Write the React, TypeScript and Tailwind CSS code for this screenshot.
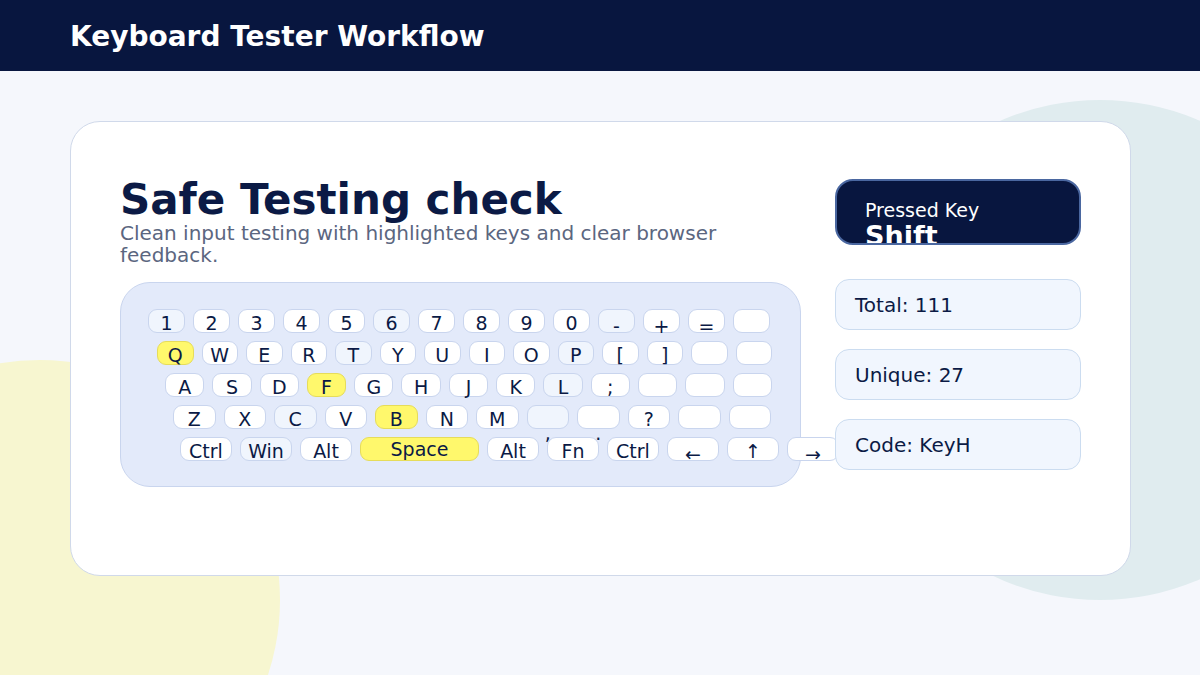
import React from "react";

const F = { fontFamily: '"DejaVu Sans", sans-serif' };
const light = new Set(["1", "6", "-", "T", "P", "L", "C", ",", "Win"]);
const yellow = new Set(["Q", "F", "B", "Space"]);

function Key({ k, w }: { k: string; w: string }) {
  const bg = yellow.has(k) ? "bg-[#fff86c] border-[#e6dc5a]" : light.has(k) ? "bg-[#f0f5fd] border-[#c9d5ee]" : "bg-white border-[#c9d5ee]";
  const lowered = k === "," || k === "." ? "pt-[18px]" : k === "-" || k === "+" || k === "=" || k === "←" || k === "→" ? "pt-[7px]" : "pt-[4px]";
  return (
    <div className={`${w} h-[24px] shrink-0 rounded-[9px] border ${bg} flex justify-center ${lowered} text-[19px] leading-none text-[#0b1a45] whitespace-nowrap`}>
      {k === "Space" ? <span className="-mt-[2px]">{k}</span> : k}
    </div>
  );
}

const rows: [string[], string][] = [
  [["1","2","3","4","5","6","7","8","9","0","-","+","=",""], "w-[37px]"],
  [["Q","W","E","R","T","Y","U","I","O","P","[","]","",""], "w-[36.5px]"],
  [["A","S","D","F","G","H","J","K","L",";","","",""], "w-[39.3px]"],
  [["Z","X","C","V","B","N","M",",",".","?","",""], "w-[42.5px]"],
];
const pads = ["pl-[27px]", "pl-[36px]", "pl-[44px]", "pl-[52px]"];
const bottom = ["Ctrl","Win","Alt","Space","Alt","Fn","Ctrl","←","↑","→"];

export default function App() {
  return (
    <div style={F} className="relative w-[1200px] h-[675px] overflow-hidden bg-[#f5f7fc]">
      <div className="absolute left-[-200px] top-[360px] w-[480px] h-[480px] rounded-full bg-[#f7f6d0]" />
      <div className="absolute left-[850px] top-[100px] w-[500px] h-[500px] rounded-full bg-[#e0ecef]" />
      <div className="relative h-[71px] bg-[#08163f] flex items-center pl-[70px] pt-[2px]">
        <span className="text-white font-bold text-[28px]">Keyboard Tester Workflow</span>
      </div>
      <div className="relative mt-[50px] ml-[70px] w-[1061px] h-[455px] rounded-[30px] bg-white border border-[#d0d9ea] flex pl-[49px] pt-[54px]">
        <div className="w-[681px]">
          <div className="text-[42px] font-bold text-[#0b1a45] leading-[48px]">Safe Testing check</div>
          <div className="text-[20px] text-[#5b6680] leading-[22px] -mt-[2px]">Clean input testing with highlighted keys and clear browser feedback.</div>
          <div className="mt-[16px] h-[205px] rounded-[30px] bg-[#e3eafa] border border-[#c9d5ee] pt-[26px] flex flex-col gap-[8px]">
            {rows.map(([ks, w], i) => (
              <div key={i} className={`flex gap-[8px] ${pads[i]}`}>
                {ks.map((k, j) => <Key key={j} k={k} w={w} />)}
              </div>
            ))}
            <div className="flex gap-[8px] pl-[59px]">
              {bottom.map((k, j) => <Key key={j} k={k} w={k === "Space" ? "w-[119px]" : "w-[52px]"} />)}
            </div>
          </div>
        </div>
        <div className="ml-[34px] w-[246px] flex flex-col pt-[3px]">
          <div className="h-[66px] rounded-[18px] bg-[#08163f] border-2 border-[#4a67a0] overflow-hidden pl-[28px] pt-[18px] text-white">
            <div className="text-[19px] leading-[22px]">Pressed Key</div>
            <div className="text-[27px] font-bold leading-[30px]">Shift</div>
          </div>
          {["Total: 111", "Unique: 27", "Code: KeyH"].map((t, i) => (
            <div key={i} className="h-[51px] rounded-[14px] bg-[#f1f6fe] border border-[#cbdcf0] flex items-center pl-[19px] text-[20px] text-[#0b1a45]" style={{ marginTop: i === 0 ? 34 : 19 }}>{t}</div>
          ))}
        </div>
      </div>
    </div>
  );
}
